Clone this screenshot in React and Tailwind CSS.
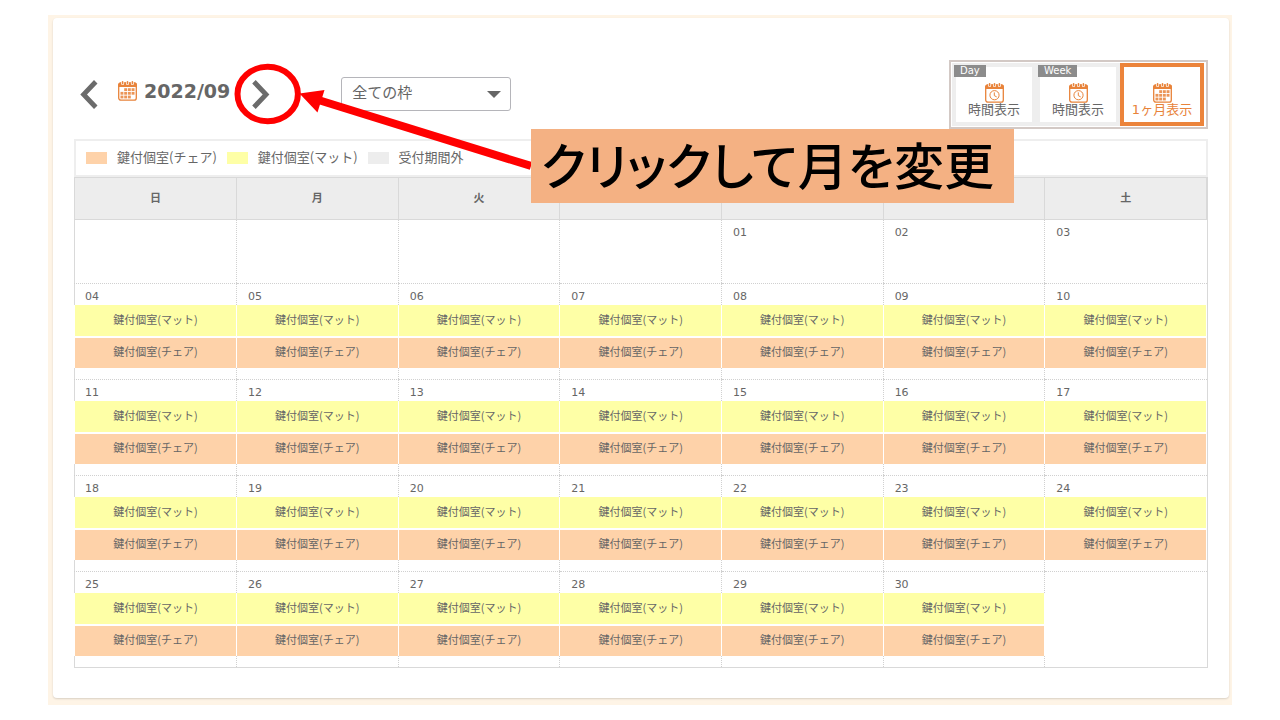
const ORANGE = "#e8833a";
// Wednesday to Friday are covered by the callout, so they are named through aria-label only.
const WEEKDAYS = [
  { name: "日曜日", text: "日" },
  { name: "月曜日", text: "月" },
  { name: "火曜日", text: "火" },
  { name: "水曜日" },
  { name: "木曜日" },
  { name: "金曜日" },
  { name: "土曜日", text: "土" },
];
const WEEKS = [
  ["", "", "", "", "01", "02", "03"],
  ["04", "05", "06", "07", "08", "09", "10"],
  ["11", "12", "13", "14", "15", "16", "17"],
  ["18", "19", "20", "21", "22", "23", "24"],
  ["25", "26", "27", "28", "29", "30", ""],
];
const LEGEND = [
  { label: "鍵付個室(チェア)", color: "bg-[#fed2a9]" },
  { label: "鍵付個室(マット)", color: "bg-[#feffa6]" },
  { label: "受付期間外", color: "bg-[#ededed]" },
];

function CalendarIcon({ variant }) {
  return (
    <svg viewBox="0 0 19 20" className="block h-5 w-[19px]" fill="none" aria-hidden="true">
      <rect x="0.7" y="2" width="17.6" height="17.2" rx="2.2" fill="#fff" stroke={ORANGE} strokeWidth="1.3" />
      <path d="M0.2 6V3.6Q0.2 1.4 2.4 1.4H16.6Q18.8 1.4 18.8 3.6V6Z" fill={ORANGE} />
      {[4.6, 9.5, 14.4].map((x) => (
        <g key={x}>
          <rect x={x - 1.5} y="0" width="3" height="4" rx="1.5" fill="#fff" />
          <rect x={x - 0.8} y="0" width="1.6" height="3.4" rx="0.8" fill={ORANGE} />
        </g>
      ))}
      {variant === "clock" ? (
        <g stroke={ORANGE} strokeWidth="1">
          <circle cx="9.5" cy="12.2" r="4.6" />
          <path d="M9.3 9.4V12.6L11.7 13.9" />
        </g>
      ) : (
        <g fill={ORANGE} fillOpacity="0.85">
          {[7.2, 10.9, 14.6].map((y, row) =>
            [2.5, 6.2, 9.9, 13.6].map((x, col) =>
              (row === 0 && col === 0) || (row === 2 && col === 3) ? null : (
                <rect key={`${x}-${y}`} x={x} y={y} width="2.9" height="2.8" />
              )
            )
          )}
        </g>
      )}
    </svg>
  );
}

function Chevron({ left }) {
  return (
    <svg viewBox="0 0 18 29" className="block h-[29px] w-[18px]" fill="#6b6b6b" aria-hidden="true">
      {left ? (
        <polygon points="14,0 0.3,14.5 14,29 17.5,25.5 7,14.5 17.5,3.5" />
      ) : (
        <polygon points="3.7,0 17.4,14.5 3.7,29 0.2,25.5 10.7,14.5 0.2,3.5" />
      )}
    </svg>
  );
}

function ViewButton({ tag, label, variant, active }) {
  return (
    <button
      type="button"
      aria-pressed={!!active}
      className={`relative flex h-[63px] w-[84px] flex-col items-center border-4 bg-white pt-4 text-[13px] leading-[14px] ${
        active ? "border-[#ec843b] text-[#e8833a]" : "border-[#eeeeee] text-[#666666]"
      }`}
    >
      {tag && (
        <span className="absolute -top-0.5 -left-0.5 bg-[#8c8c8c] px-1.5 text-[10px] leading-3 text-white">{tag}</span>
      )}
      <CalendarIcon variant={variant} />
      <span className="whitespace-nowrap">{label}</span>
    </button>
  );
}

function DayCell({ day, first, last, hasSlots, bottom }) {
  const side = `${last ? "" : "border-r"} ${first ? "border-l border-l-[#d9d9d9] pl-2.5" : "pl-[11px]"} border-dotted border-r-[#d0d0d0] ${
    first ? "[border-left-style:solid]" : ""
  }`;
  const slotSide = `border-r ${first ? "border-l" : ""} border-white`;
  return (
    <td className={`p-0 align-top ${bottom ? "" : "border-b border-dotted border-[#d0d0d0]"}`}>
      {hasSlots && day ? (
        <>
          <div className={`h-[21px] pt-1 leading-[18px] ${side}`}>{day}</div>
          <div className={slotSide}>
            <div className="h-[31px] bg-[#feffa6] text-center font-['Noto_Sans_CJK_JP',sans-serif] leading-7">鍵付個室(マット)</div>
          </div>
          <div className={`pt-0.5 ${slotSide}`}>
            <div className="h-[30px] bg-[#fed2a9] text-center font-['Noto_Sans_CJK_JP',sans-serif] leading-[26px]">鍵付個室(チェア)</div>
          </div>
          <div className={`h-[11px] ${side}`} />
        </>
      ) : (
        <div className={`pt-1 leading-[18px] ${hasSlots ? "h-[95px]" : "h-[63px]"} ${side}`}>{day}</div>
      )}
    </td>
  );
}

export default function App() {
  return (
    <div className="bg-white px-12 py-[15px] font-['DejaVu_Sans','Noto_Sans_CJK_JP',sans-serif] text-[#666666]">
      <div className="bg-[#fef4e6] pt-[3px] pr-[3px] pb-[7px] pl-[5px]">
        <main className="relative rounded bg-white px-[21px] pt-[42px] pb-[30px] shadow-[0_1px_2px_rgba(0,0,0,0.15)]">
          <header className="flex h-[69px] items-center">
            <button type="button" aria-label="前の月" className="ml-1.5">
              <Chevron left />
            </button>
            <div className="mb-2 ml-5 flex items-center gap-[7px]">
              <CalendarIcon />
              <h1 className="text-[19px] leading-6 font-bold">2022/09</h1>
            </div>
            <button type="button" aria-label="次の月" className="ml-[22px]">
              <Chevron />
            </button>
            <div className="relative mb-0.5 ml-[71px]">
              <select
                aria-label="枠の選択"
                className="h-[34px] w-[170px] appearance-none rounded-[3px] border border-[#b5b5ba] bg-white pl-2.5 text-[15px] text-[#666666]"
              >
                <option>全ての枠</option>
              </select>
              <svg viewBox="0 0 14 7" className="pointer-events-none absolute top-3.5 right-2.5 h-[7px] w-3.5" fill="#666" aria-hidden="true">
                <path d="M0 0H14L7 7Z" />
              </svg>
            </div>
            <div className="ml-auto flex border-2 border-[#d3c9c5] py-px pr-0.5 pl-px">
              <ViewButton tag="Day" label="時間表示" variant="clock" />
              <ViewButton tag="Week" label="時間表示" variant="clock" />
              <ViewButton label="1ヶ月表示" active />
            </div>
          </header>

          <ul className="mt-2.5 flex h-[38px] items-center gap-2.5 border-2 border-[#eeeeee] px-2.5 font-['Noto_Sans_CJK_JP',sans-serif] text-[13px]">
            {LEGEND.map((item) => (
              <li key={item.label} className="flex items-center gap-2.5">
                <span className={`h-3 w-[21px] ${item.color}`} />
                <span className="pb-[3px] leading-5">{item.label}</span>
              </li>
            ))}
          </ul>

          <div className="border-r border-b border-[#d9d9d9]">
            <table className="w-full table-fixed border-separate border-spacing-0 text-[11px]">
              <colgroup>
                <col className="w-[163px]" />
                <col span={6} />
              </colgroup>
              <thead>
                <tr>
                  {WEEKDAYS.map((d, i) => (
                    <th
                      key={d.name}
                      scope="col"
                      aria-label={d.name}
                      className={`h-[43px] border-y border-r border-[#d9d9d9] bg-[#ededed] p-0 pt-0.5 font-bold ${i === 0 ? "border-l" : ""}`}
                    >
                      {d.text}
                    </th>
                  ))}
                </tr>
              </thead>
              <tbody>
                {WEEKS.map((week, w) => (
                  <tr key={w}>
                    {week.map((day, i) => (
                      <DayCell
                        key={i}
                        day={day}
                        first={i === 0}
                        last={i === 6}
                        hasSlots={w > 0}
                        bottom={w === WEEKS.length - 1}
                      />
                    ))}
                  </tr>
                ))}
              </tbody>
            </table>
          </div>

          {/* Guide overlay: ring, arrow and callout for the next-month button */}
          <svg
            viewBox="0 0 300 110"
            className="pointer-events-none absolute top-[42px] left-[179px] h-[110px] w-[300px]"
            aria-hidden="true"
          >
            <ellipse cx="35.7" cy="34" rx="30.2" ry="27.2" fill="none" stroke="#ff0000" strokeWidth="6" />
            <path d="M88 40.5L299 106" stroke="#ff0000" strokeWidth="8" />
            <polygon points="67.5,33.5 92.5,30 85.5,52.5" fill="#ff0000" />
          </svg>
          <p className="absolute top-[111px] left-[478px] h-[74px] w-[483px] bg-[#f4b183] pl-2.5 font-['Noto_Sans_CJK_JP',sans-serif] text-[50px] leading-[68px] font-medium whitespace-nowrap text-black [font-feature-settings:'palt']">
            クリックして月を変更
          </p>
        </main>
      </div>
    </div>
  );
}
